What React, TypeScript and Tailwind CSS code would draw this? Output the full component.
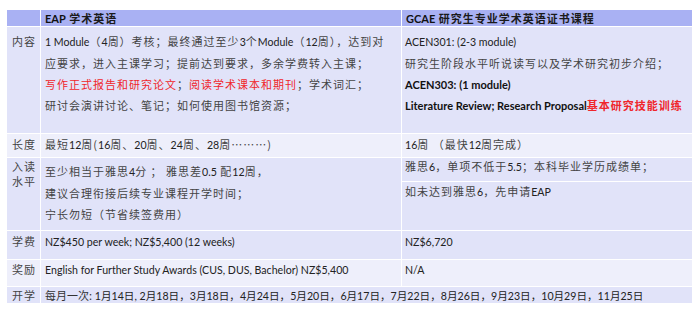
const latin = 'tracking-normal font-["Lato","Noto_Sans_CJK_SC",sans-serif]';

const Cell = ({ className = '', children }: { className?: string; children?: React.ReactNode }) => (
  <div className={`overflow-hidden ${className}`}>{children}</div>
);

const L = ({ children, bold = false }: { children: React.ReactNode; bold?: boolean }) => (
  <span className={`${latin} ${bold ? 'text-[11px] font-bold text-[#111]' : 'text-[10.6px] text-[#222]'}`}>{children}</span>
);

const Red = ({ children }: { children: React.ReactNode }) => (
  <span className="text-[#f0262b]">{children}</span>
);

const dark = 'bg-[#e1e3f9]';
const light = 'bg-[#eeeffb]';

export default function App() {
  return (
    <div className="h-[319px] w-[700px] bg-white pt-[10px] pl-[7px] font-['Noto_Sans_CJK_SC',sans-serif] text-[11px] leading-[21px] tracking-[1px] text-[#444]">
      <div className="grid w-[685px] grid-cols-[33px_360px_290px] grid-rows-[16px_106px_23px_72px_28px_26px_16px] gap-[1px_1px] bg-white">
        {/* header */}
        <Cell className="bg-[#a9b1f3]" />
        <Cell className="bg-[#a9b1f3] pl-[4px] leading-[16px] font-bold text-[#1a1a1a]">
          <L bold>EAP</L> 学术英语
        </Cell>
        <Cell className="bg-[#a9b1f3] pl-[4px] leading-[16px] font-bold text-[#1a1a1a]">
          <L bold>GCAE</L> 研究生专业学术英语证书课程
        </Cell>

        {/* 内容 */}
        <Cell className={`${dark} pl-[5px] pt-[4px]`}>内容</Cell>
        <Cell className={`${dark} pl-[4px] pt-[4px] whitespace-nowrap`}>
          <div>
            <L> 1 Module</L>（<L>4</L>周）考核；最终通过至少<L>3</L>个<L>Module</L>（<L>12</L>周），达到对
          </div>
          <div>应要求，进入主课学习；提前达到要求，多余学费转入主课；</div>
          <div>
            <Red>写作正式报告和研究论文</Red>；<Red>阅读学术课本和期刊</Red>；学术词汇；
          </div>
          <div>研讨会演讲讨论、笔记；如何使用图书馆资源；</div>
        </Cell>
        <Cell className={`${dark} pl-[3px] pt-[4px] whitespace-nowrap`}>
          <div>
            <L>ACEN301: (2-3 module)</L>
          </div>
          <div>研究生阶段水平听说读写以及学术研究初步介绍；</div>
          <div>
            <L bold>ACEN303: (1 module)</L>
          </div>
          <div>
            <L bold>Literature Review; Research Proposal</L>
            <span className="font-bold">
              <Red>基本研究技能训练</Red>
            </span>
          </div>
        </Cell>

        {/* 长度 */}
        <Cell className={`${light} pl-[5px]`}>长度</Cell>
        <Cell className={`${light} pl-[4px] whitespace-nowrap`}>
          最短<L>12</L>周(<L>16</L>周、<L>20</L>周、<L>24</L>周、<L>28</L>周………)
        </Cell>
        <Cell className={`${light} pl-[3px] whitespace-nowrap`}>
          <L>16</L>周 （最快<L>12</L>周完成）
        </Cell>

        {/* 入读水平 */}
        <Cell className={`${dark} pl-[5px] pt-[1px] leading-[15px]`}>
          入读
          <br />
          水平
        </Cell>
        <Cell className={`${dark} pl-[4px] pt-[3px] whitespace-nowrap`}>
          <div>
            至少相当于雅思<L>4</L>分 ；  雅思差<L>0.5</L> 配<L>12</L>周，
          </div>
          <div>建议合理衔接后续专业课程开学时间；</div>
          <div>宁长勿短（节省续签费用）</div>
        </Cell>
        <div className="grid grid-rows-[23px_1fr] gap-[1px] bg-white">
          <Cell className={`${dark} pl-[3px] leading-[16px] whitespace-nowrap`}>
            雅思<L>6</L>，单项不低于<L>5.5</L>；本科毕业学历成绩单；
          </Cell>
          <Cell className={`${dark} pl-[3px] pt-[1px] leading-[16px] whitespace-nowrap`}>
            如未达到雅思<L>6</L>，先申请<L>EAP</L>
          </Cell>
        </div>

        {/* 学费 */}
        <Cell className={`${dark} pl-[5px]`}>学费</Cell>
        <Cell className={`${dark} pl-[4px] whitespace-nowrap`}>
          <L>NZ$450 per week; NZ$5,400 (12 weeks)</L>
        </Cell>
        <Cell className={`${dark} pl-[3px] whitespace-nowrap`}>
          <L>NZ$6,720</L>
        </Cell>

        {/* 奖励 */}
        <Cell className={`${light} pl-[5px] leading-[18px]`}>奖励</Cell>
        <Cell className={`${light} pl-[4px] leading-[18px] whitespace-nowrap`}>
          <L>English for Further Study Awards (CUS, DUS, Bachelor) NZ$5,400</L>
        </Cell>
        <Cell className={`${light} pl-[3px] leading-[18px] whitespace-nowrap`}>
          <L>N/A</L>
        </Cell>

        {/* 开学 */}
        <Cell className={`${dark} pl-[5px] leading-[16px]`}>开学</Cell>
        <Cell className={`${dark} col-span-2 pl-[4px] leading-[16px] whitespace-nowrap tracking-normal text-[#333]`}>
          每月一次:
          <span className={`${latin} text-[10.6px] text-[#222]`}>
            {' '}1月14日, 2月18日，3月18日，4月24日，5月20日，6月17日，7月22日，8月26日，9月23日，10月29日，11月25日
          </span>
        </Cell>
      </div>
    </div>
  );
}
